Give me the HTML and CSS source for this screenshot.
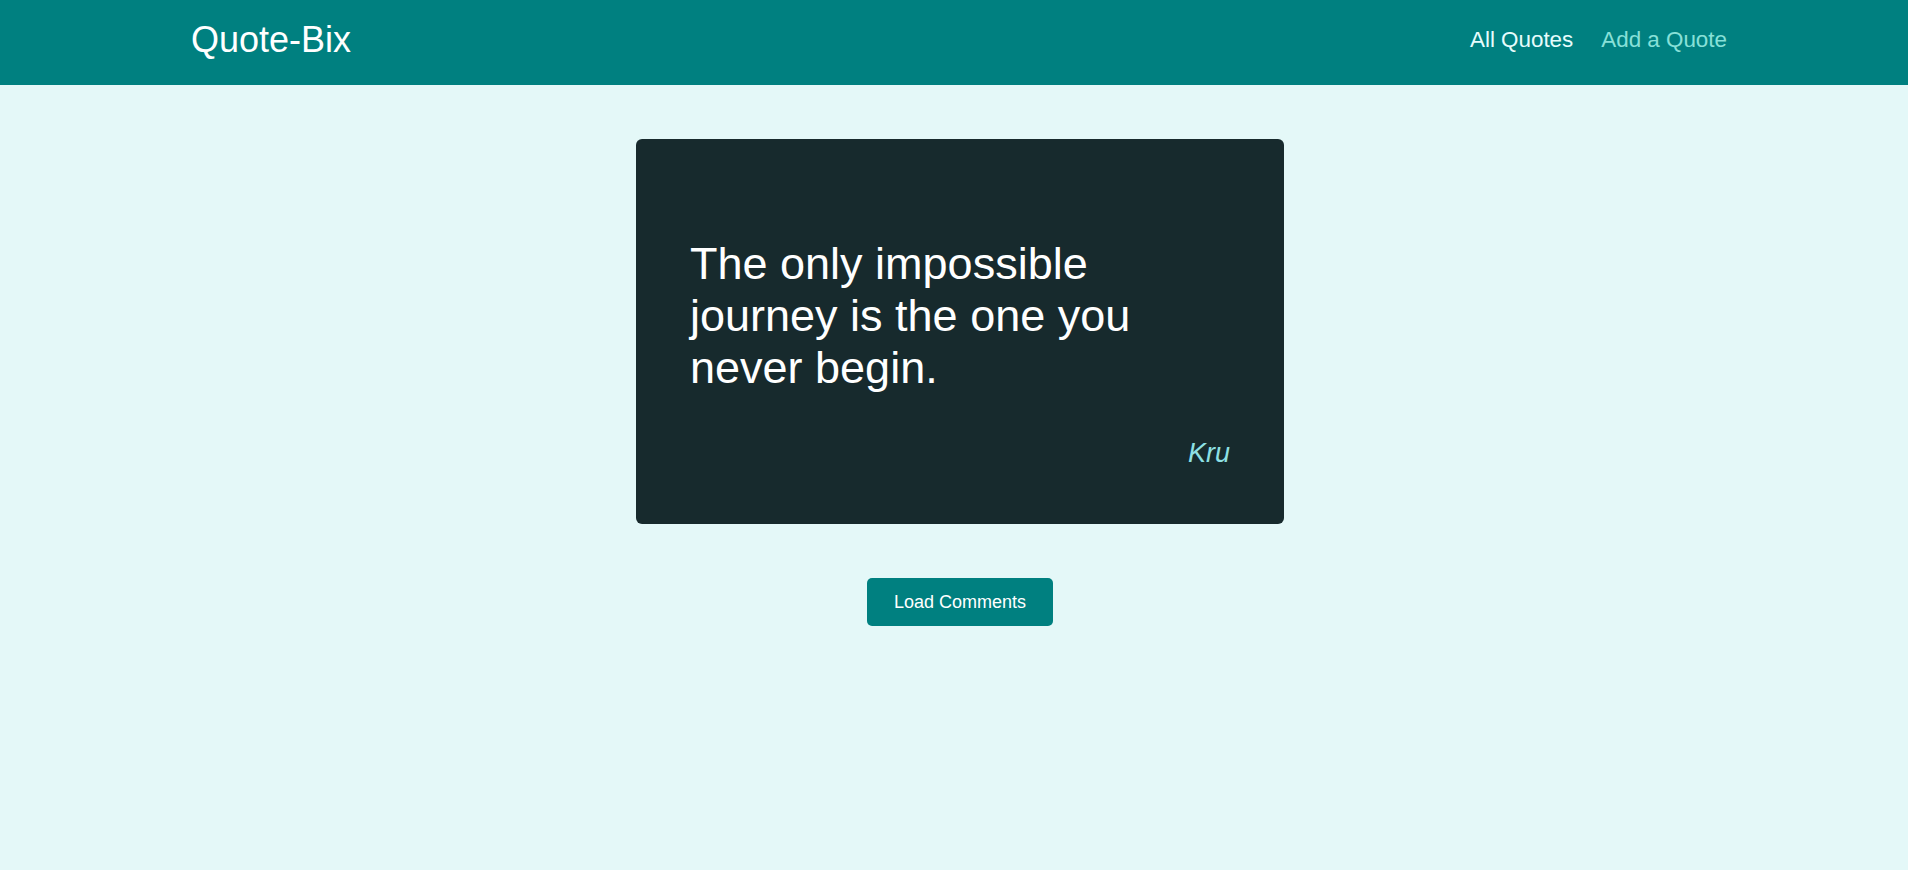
FILE: index.html
```html
<!DOCTYPE html>
<html lang="en">
<head>
<meta charset="utf-8">
<title>Quote-Bix</title>
<link rel="stylesheet" href="styles.css">
</head>
<body>
<header class="header">
  <div class="logo">Quote-Bix</div>
  <nav class="nav">
    <a class="nav-link active" href="#">All Quotes</a>
    <a class="nav-link" href="#">Add a Quote</a>
  </nav>
</header>
<main class="main">
  <figure class="quote-card">
    <p class="quote-text">The only impossible journey is the one you never begin.</p>
    <figcaption class="quote-author">Kru</figcaption>
  </figure>
  <div class="actions">
    <button class="btn" type="button">Load Comments</button>
  </div>
</main>
</body>
</html>
```

FILE: styles.css
```css
* { box-sizing: border-box; }

html, body {
  margin: 0;
  padding: 0;
}

body {
  background: #e4f8f8;
  font-family: "Liberation Sans", Arial, sans-serif;
  min-height: 870px;
}

.header {
  height: 85px;
  background: #008080;
  display: flex;
  align-items: center;
  justify-content: space-between;
  padding: 0 181px 6px 191px;
}

.logo {
  color: #ffffff;
  font-size: 36px;
  line-height: 40px;
}

.nav {
  display: flex;
  gap: 28px;
}

.nav-link {
  font-size: 22.4px;
  text-decoration: none;
  color: #88e0d8;
  line-height: 26px;
}

.nav-link.active {
  color: #e6fcfc;
}

.main {
  padding-left: 12px;
  display: flex;
  flex-direction: column;
  align-items: center;
}

.quote-card {
  margin: 54px 0 0;
  width: 648px;
  height: 385px;
  background: #172a2d;
  border-radius: 6px;
  padding: 99px 54px 0 54px;
  display: flex;
  flex-direction: column;
}

.quote-text {
  margin: 0;
  color: #ffffff;
  font-size: 45px;
  line-height: 52px;
}

.quote-author {
  margin-top: 44px;
  text-align: right;
  font-style: italic;
  color: #8ee0e4;
  font-size: 27px;
  line-height: 31px;
}

.actions {
  margin-top: 54px;
}

.btn {
  font-family: "Liberation Sans", Arial, sans-serif;
  font-size: 18px;
  line-height: 20px;
  color: #ffffff;
  background: #008080;
  border: none;
  border-radius: 5px;
  padding: 14px 27px;
  white-space: nowrap;
  cursor: pointer;
}
```
